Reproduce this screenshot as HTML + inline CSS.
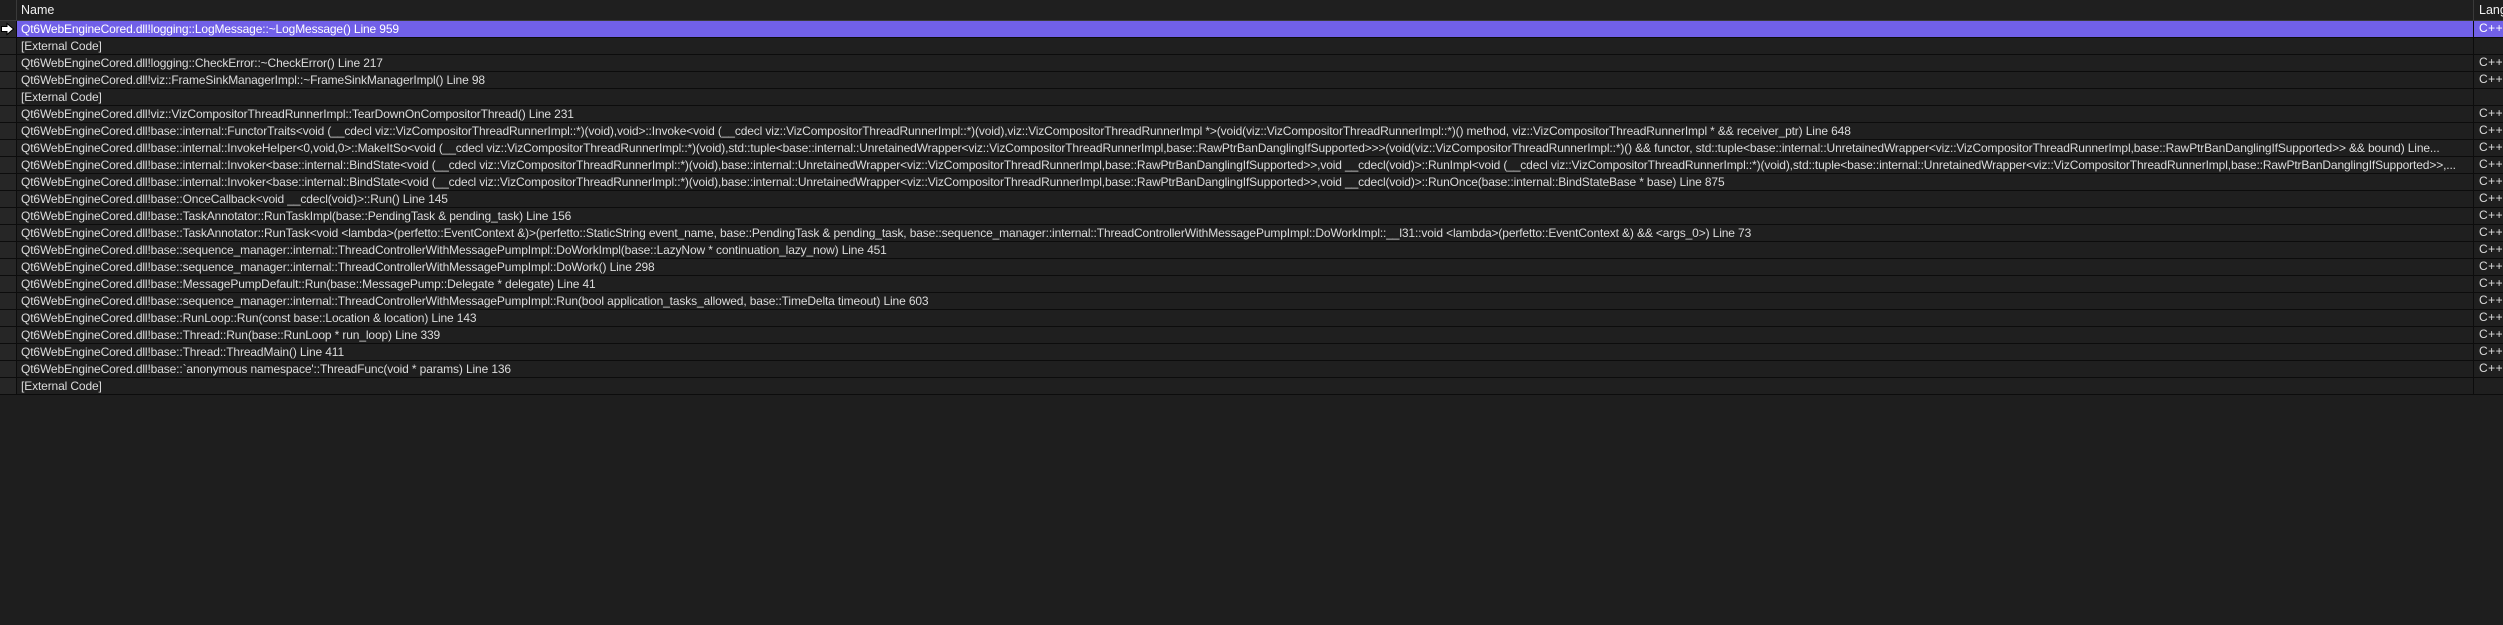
<!DOCTYPE html>
<html><head><meta charset="utf-8"><style>
html,body{margin:0;padding:0;background:#1e1e1e;width:2503px;height:625px;overflow:hidden}
body{font-family:"Liberation Sans",sans-serif;font-size:12px;color:#dcdcdc}
.hdr{position:absolute;left:0;top:0;width:2503px;height:21px;background:#1f1f1f;border-bottom:1px solid #3a3a3a;box-sizing:border-box}
.hdr .n{position:absolute;left:21px;top:3px;color:#f0f0f0;font-size:12.5px}
.hdr .l{position:absolute;left:2479px;top:3px;color:#f0f0f0;font-size:12.5px}
.hdr .d1{position:absolute;left:16px;top:0;width:1px;height:21px;background:#3a3a3a}
.hdr .d2{position:absolute;left:2473px;top:0;width:1px;height:21px;background:#3a3a3a}
.row{position:absolute;left:0;width:2503px;height:17px;background:#1f1f1f;border-bottom:1px solid #0c0c0c;box-sizing:border-box}
.g{position:absolute;left:0;top:0;width:16px;height:16px;background:#262626;border-right:1px solid #0c0c0c}
.t{position:absolute;left:21px;top:1px;width:2448px;white-space:nowrap;overflow:hidden;text-overflow:ellipsis;letter-spacing:-0.13px;line-height:14px}
.c{position:absolute;left:2473px;top:0;height:16px;border-left:1px solid #0c0c0c;padding-left:5px;line-height:15px;letter-spacing:0.5px}
.sel{background:#7160e8;color:#fff}
.sel .g{background:#2a2a2a}
</style></head><body>
<div class="hdr"><div class="d1"></div><span class="n">Name</span><div class="d2"></div><span class="l">Lang</span></div>
<div class="row sel" style="top:21px"><div class="g"><svg width="16" height="16" viewBox="0 0 16 16"><path d="M1.5 5.5H7V2.5L13.5 8L7 13.5V10.5H1.5Z" fill="#fff" stroke="#000" stroke-width="1"/></svg></div><div class="t">Qt6WebEngineCored.dll!logging::LogMessage::~LogMessage() Line 959</div><div class="c">C++</div></div>
<div class="row" style="top:38px"><div class="g"></div><div class="t">[External Code]</div><div class="c"></div></div>
<div class="row" style="top:55px"><div class="g"></div><div class="t">Qt6WebEngineCored.dll!logging::CheckError::~CheckError() Line 217</div><div class="c">C++</div></div>
<div class="row" style="top:72px"><div class="g"></div><div class="t">Qt6WebEngineCored.dll!viz::FrameSinkManagerImpl::~FrameSinkManagerImpl() Line 98</div><div class="c">C++</div></div>
<div class="row" style="top:89px"><div class="g"></div><div class="t">[External Code]</div><div class="c"></div></div>
<div class="row" style="top:106px"><div class="g"></div><div class="t">Qt6WebEngineCored.dll!viz::VizCompositorThreadRunnerImpl::TearDownOnCompositorThread() Line 231</div><div class="c">C++</div></div>
<div class="row" style="top:123px"><div class="g"></div><div class="t">Qt6WebEngineCored.dll!base::internal::FunctorTraits&lt;void (__cdecl viz::VizCompositorThreadRunnerImpl::*)(void),void&gt;::Invoke&lt;void (__cdecl viz::VizCompositorThreadRunnerImpl::*)(void),viz::VizCompositorThreadRunnerImpl *&gt;(void(viz::VizCompositorThreadRunnerImpl::*)() method, viz::VizCompositorThreadRunnerImpl * &amp;&amp; receiver_ptr) Line 648</div><div class="c">C++</div></div>
<div class="row" style="top:140px"><div class="g"></div><div class="t">Qt6WebEngineCored.dll!base::internal::InvokeHelper&lt;0,void,0&gt;::MakeItSo&lt;void (__cdecl viz::VizCompositorThreadRunnerImpl::*)(void),std::tuple&lt;base::internal::UnretainedWrapper&lt;viz::VizCompositorThreadRunnerImpl,base::RawPtrBanDanglingIfSupported&gt;&gt;&gt;(void(viz::VizCompositorThreadRunnerImpl::*)() &amp;&amp; functor, std::tuple&lt;base::internal::UnretainedWrapper&lt;viz::VizCompositorThreadRunnerImpl,base::RawPtrBanDanglingIfSupported&gt;&gt; &amp;&amp; bound) Line...</div><div class="c">C++</div></div>
<div class="row" style="top:157px"><div class="g"></div><div class="t">Qt6WebEngineCored.dll!base::internal::Invoker&lt;base::internal::BindState&lt;void (__cdecl viz::VizCompositorThreadRunnerImpl::*)(void),base::internal::UnretainedWrapper&lt;viz::VizCompositorThreadRunnerImpl,base::RawPtrBanDanglingIfSupported&gt;&gt;,void __cdecl(void)&gt;::RunImpl&lt;void (__cdecl viz::VizCompositorThreadRunnerImpl::*)(void),std::tuple&lt;base::internal::UnretainedWrapper&lt;viz::VizCompositorThreadRunnerImpl,base::RawPtrBanDanglingIfSupported&gt;&gt;,...</div><div class="c">C++</div></div>
<div class="row" style="top:174px"><div class="g"></div><div class="t">Qt6WebEngineCored.dll!base::internal::Invoker&lt;base::internal::BindState&lt;void (__cdecl viz::VizCompositorThreadRunnerImpl::*)(void),base::internal::UnretainedWrapper&lt;viz::VizCompositorThreadRunnerImpl,base::RawPtrBanDanglingIfSupported&gt;&gt;,void __cdecl(void)&gt;::RunOnce(base::internal::BindStateBase * base) Line 875</div><div class="c">C++</div></div>
<div class="row" style="top:191px"><div class="g"></div><div class="t">Qt6WebEngineCored.dll!base::OnceCallback&lt;void __cdecl(void)&gt;::Run() Line 145</div><div class="c">C++</div></div>
<div class="row" style="top:208px"><div class="g"></div><div class="t">Qt6WebEngineCored.dll!base::TaskAnnotator::RunTaskImpl(base::PendingTask &amp; pending_task) Line 156</div><div class="c">C++</div></div>
<div class="row" style="top:225px"><div class="g"></div><div class="t">Qt6WebEngineCored.dll!base::TaskAnnotator::RunTask&lt;void &lt;lambda&gt;(perfetto::EventContext &amp;)&gt;(perfetto::StaticString event_name, base::PendingTask &amp; pending_task, base::sequence_manager::internal::ThreadControllerWithMessagePumpImpl::DoWorkImpl::__l31::void &lt;lambda&gt;(perfetto::EventContext &amp;) &amp;&amp; &lt;args_0&gt;) Line 73</div><div class="c">C++</div></div>
<div class="row" style="top:242px"><div class="g"></div><div class="t">Qt6WebEngineCored.dll!base::sequence_manager::internal::ThreadControllerWithMessagePumpImpl::DoWorkImpl(base::LazyNow * continuation_lazy_now) Line 451</div><div class="c">C++</div></div>
<div class="row" style="top:259px"><div class="g"></div><div class="t">Qt6WebEngineCored.dll!base::sequence_manager::internal::ThreadControllerWithMessagePumpImpl::DoWork() Line 298</div><div class="c">C++</div></div>
<div class="row" style="top:276px"><div class="g"></div><div class="t">Qt6WebEngineCored.dll!base::MessagePumpDefault::Run(base::MessagePump::Delegate * delegate) Line 41</div><div class="c">C++</div></div>
<div class="row" style="top:293px"><div class="g"></div><div class="t">Qt6WebEngineCored.dll!base::sequence_manager::internal::ThreadControllerWithMessagePumpImpl::Run(bool application_tasks_allowed, base::TimeDelta timeout) Line 603</div><div class="c">C++</div></div>
<div class="row" style="top:310px"><div class="g"></div><div class="t">Qt6WebEngineCored.dll!base::RunLoop::Run(const base::Location &amp; location) Line 143</div><div class="c">C++</div></div>
<div class="row" style="top:327px"><div class="g"></div><div class="t">Qt6WebEngineCored.dll!base::Thread::Run(base::RunLoop * run_loop) Line 339</div><div class="c">C++</div></div>
<div class="row" style="top:344px"><div class="g"></div><div class="t">Qt6WebEngineCored.dll!base::Thread::ThreadMain() Line 411</div><div class="c">C++</div></div>
<div class="row" style="top:361px"><div class="g"></div><div class="t">Qt6WebEngineCored.dll!base::`anonymous namespace'::ThreadFunc(void * params) Line 136</div><div class="c">C++</div></div>
<div class="row" style="top:378px"><div class="g"></div><div class="t">[External Code]</div><div class="c"></div></div>
</body></html>
